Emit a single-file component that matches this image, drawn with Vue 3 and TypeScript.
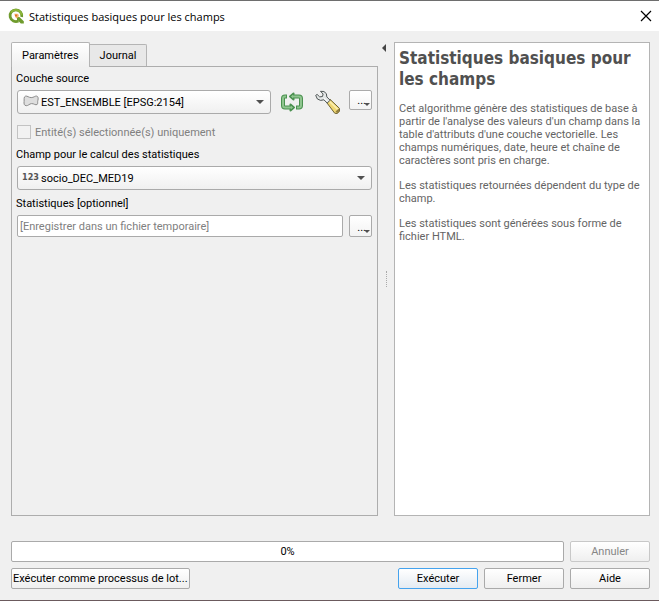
<script setup lang="ts">
import { ref } from 'vue'

const layer = ref<string>('EST_ENSEMBLE [EPSG:2154]')
const field = ref<string>('socio_DEC_MED19')
const output = ref<string>('')
const selectedOnly = ref<boolean>(false)
const activeTab = ref<'params' | 'log'>('params')
const progress = ref<number>(0)

const paragraphs: string[] = [
  "Cet algorithme génère des statistiques de base à partir de l'analyse des valeurs d'un champ dans la table d'attributs d'une couche vectorielle. Les champs numériques, date, heure et chaîne de caractères sont pris en charge.",
  'Les statistiques retournées dépendent du type de champ.',
  'Les statistiques sont générées sous forme de fichier HTML.',
]
</script>

<template>
  <div class="dialog">
    <header class="titlebar">
      <svg class="logo" width="16" height="16" viewBox="0 0 16 16" aria-hidden="true">
        <path d="M10.500 13A5.900 5.900 0 1 1 13.700 9" fill="none" stroke="#6f9b2d" stroke-width="2.800" />
        <path d="M3 4.500A5.900 5.900 0 0 1 13.600 7" fill="none" stroke="#8db63a" stroke-width="2" />
        <path d="M9 9h2.400l4.400 4.200v2.300h-3L9 11.600z" fill="#6f9b2d" />
        <path d="M6.200 5.800h3.400l1.200 1.300-.4 2.200-2.300 1.200z" fill="#f3b46b" />
        <circle cx="8" cy="7.600" r="1.100" fill="#e0702a" />
      </svg>
      <h1 class="title">Statistiques basiques pour les champs</h1>
      <button class="close" type="button" aria-label="Fermer la fenêtre">
        <svg width="12" height="12" viewBox="0 0 12 12"><path d="M1 1l10 10M11 1L1 11" stroke="#000" stroke-width="1.2" /></svg>
      </button>
    </header>

    <main class="body">
      <section class="left">
        <div class="tabs" role="tablist">
          <button class="tab" :class="{ active: activeTab === 'params' }" type="button" role="tab" @click="activeTab = 'params'">Paramètres</button>
          <button class="tab" :class="{ active: activeTab === 'log' }" type="button" role="tab" @click="activeTab = 'log'">Journal</button>
        </div>
        <form class="panel" @submit.prevent>
          <label class="label" for="layer">Couche source</label>
          <div class="row">
            <div class="combo">
              <svg class="combo-icon" width="16" height="12" viewBox="0 0 16 12" aria-hidden="true">
                <path d="M2.400 1.200C4.500.6 5.600 2.600 8.200 2.600S12 .8 13.600 1.100C15.200 1.400 15.500 3.400 14.900 5.300S15.100 8.600 14.200 9.400C12.600 10.700 11 8.400 8.500 8.600C6.300 8.800 5.200 10.900 3.200 10.700C1.100 10.500.8 8.700 1.100 6.500C1.300 4.600.6 1.800 2.400 1.200z" fill="#dedede" stroke="#8b8b8b" />
              </svg>
              <select id="layer" v-model="layer" class="select">
                <option>EST_ENSEMBLE [EPSG:2154]</option>
              </select>
              <span class="arrow"></span>
            </div>
            <button class="icon-btn" type="button" aria-label="Itérer sur les entités">
              <svg width="24" height="24" viewBox="0 0 24 24">
                <g fill="none" stroke-linejoin="round">
                  <path d="M7 6.500H5a2 2 0 0 0-2 2v7a2 2 0 0 0 2 2H10M16 17.500h3a2 2 0 0 0 2-2v-7a2 2 0 0 0-2-2H14" stroke="#4b9150" stroke-width="4" />
                  <path d="M13.500 3.500v6L10 6.500zM10.500 14.500v6L14 17.500z" fill="#8fc58f" stroke="#4b9150" stroke-width="2" />
                  <path d="M6 6.500H5a2 2 0 0 0-2 2v7a2 2 0 0 0 2 2H12M17 17.500h2a2 2 0 0 0 2-2v-7a2 2 0 0 0-2-2H12" stroke="#8fc58f" stroke-width="2" />
                  <path d="M13 4.700v3.600L11 6.500zM11 15.700v3.600L13 17.500z" fill="#8fc58f" />
                </g>
              </svg>
            </button>
            <button class="icon-btn" type="button" aria-label="Options avancées">
              <svg width="27" height="24" viewBox="-2 0 27 24">
                <path d="M11.800 12.700l3.200-3.400L24.500 18.400v2.900l-2.400 2.200-2.400-.3z" fill="#f0d873" stroke="#6b6135" stroke-width="1" />
                <path d="M14.500 11.400l8.500 8.200" stroke="#fbeeb0" stroke-width="1.500" />
                <path d="M20.500 21.600l3-2.800 1 1v1.500l-2.200 1.900z" fill="#94803f" />
                <path d="M5.500 1.300l3.400.2 2.500 2.200.4 3.200 3.300 3.300-2.900 2.900-3.300-3.300-3.300.6L2.400 9 .7 5.400l1.400-1L4.700 6.900l2.800-.4.600-2.500z" fill="#e4e7e7" stroke="#4f5656" stroke-width="1" stroke-linejoin="round" />
                <path d="M9 8.200l3.500 3.300" stroke="#fff" />
              </svg>
            </button>
            <button class="more" type="button" aria-label="Choisir la source"><span class="dots">...</span><span class="more-arrow"></span></button>
          </div>

          <label class="check disabled">
            <input v-model="selectedOnly" class="box" type="checkbox" disabled />
            <span>Entité(s) sélectionnée(s) uniquement</span>
          </label>

          <label class="label" for="field">Champ pour le calcul des statistiques</label>
          <div class="row">
            <div class="combo">
              <span class="combo-icon num">123</span>
              <select id="field" v-model="field" class="select">
                <option>socio_DEC_MED19</option>
              </select>
              <span class="arrow"></span>
            </div>
          </div>

          <label class="label" for="output">Statistiques [optionnel]</label>
          <div class="row tight">
            <input id="output" v-model="output" class="text" type="text" placeholder="[Enregistrer dans un fichier temporaire]" />
            <button class="more tall" type="button" aria-label="Choisir la sortie"><span class="dots">...</span><span class="more-arrow"></span></button>
          </div>
        </form>
      </section>

      <div class="splitter">
        <button class="collapse" type="button" aria-label="Replier l'aide"></button>
        <span class="grip"></span>
      </div>

      <article class="help">
        <h2>Statistiques basiques pour les champs</h2>
        <p v-for="p in paragraphs" :key="p">{{ p }}</p>
      </article>
    </main>

    <footer class="footer">
      <div class="line">
        <div class="progress" role="progressbar" :aria-valuenow="progress" aria-valuemin="0" aria-valuemax="100">{{ progress }}%</div>
        <button class="btn" type="button" disabled>Annuler</button>
      </div>
      <div class="line">
        <button class="btn batch" type="button">Exécuter comme processus de lot...</button>
        <button class="btn primary" type="button">Exécuter</button>
        <button class="btn" type="button">Fermer</button>
        <button class="btn" type="button">Aide</button>
      </div>
    </footer>
  </div>
</template>

<style>
body {
  background: #f0f0f0;
}
</style>

<style scoped>
.dialog,
.dialog * {
  box-sizing: border-box;
}
.dialog {
  display: flex;
  flex-direction: column;
  min-height: 100vh;
  border-top: 1px solid #6e6e6e;
  border-bottom: 1px solid #6b5a5d;
  background: #f0f0f0;
  color: #000;
  font-family: Tahoma, Roboto, sans-serif;
  font-size: 11px;
  line-height: 13px;
}
button,
input,
select {
  margin: 0;
  font: inherit;
  color: inherit;
}
.titlebar {
  display: flex;
  align-items: center;
  height: 30px;
  padding: 0 7px 0 8px;
  gap: 5px;
  background: #fff;
}
.title {
  flex: 1;
  margin: 0;
  font-family: 'Open Sans', 'Noto Sans', sans-serif;
  font-size: 11px;
  font-weight: 400;
}
.close {
  display: flex;
  padding: 0;
  border: 0;
  background: none;
}
.body {
  display: grid;
  grid-template-columns: minmax(0, 367fr) 16px minmax(0, 256fr);
  flex: 1;
  padding: 11px 9px 0 11px;
}
.left {
  display: flex;
  flex-direction: column;
}
.tabs {
  display: flex;
  align-items: flex-end;
  height: 24px;
}
.tab {
  height: 22px;
  padding: 0 10px;
  border: 1px solid #b4b4b4;
  border-left: 0;
  border-bottom: 0;
  border-radius: 0 2px 0 0;
  background: #e8e8e8;
}
.tab.active {
  position: relative;
  z-index: 1;
  height: 25px;
  margin-bottom: -1px;
  border-left: 1px solid #b4b4b4;
  border-radius: 2px 2px 0 0;
  background: linear-gradient(#fff, #f0f0f0);
}
.panel {
  display: flex;
  flex-direction: column;
  flex: 1;
  padding: 5px 5px 0 4px;
  border: 1px solid #adadad;
}
.label {
  margin-bottom: 5px;
}
.row {
  display: flex;
  align-items: flex-start;
  gap: 9px;
  padding-left: 1px;
  margin-bottom: 7px;
}
.row.tight {
  gap: 6px;
}
.combo {
  position: relative;
  flex: 1;
  min-width: 0;
}
.combo-icon {
  position: absolute;
  left: 6px;
  top: 5px;
  pointer-events: none;
}
.num {
  left: 5px;
  color: #555;
  font-family: 'DejaVu Sans Condensed', 'DejaVu Sans', sans-serif;
  font-stretch: condensed;
  font-size: 9px;
  font-weight: 700;
}
.select {
  display: block;
  width: 100%;
  height: 24px;
  padding: 1px 24px 0 23px;
  appearance: none;
  border: 1px solid #aaa;
  border-radius: 3px;
  background: linear-gradient(#fff, #f0f0f0);
}
.arrow {
  position: absolute;
  right: 7px;
  top: 10px;
  border: 4px solid transparent;
  border-top-color: #505050;
  border-bottom: 0;
  pointer-events: none;
}
.icon-btn {
  display: flex;
  padding: 0;
  border: 0;
  background: none;
}
.more {
  position: relative;
  width: 23px;
  height: 20px;
  padding: 0;
  border: 1px solid #aaa;
  border-radius: 2px;
  background: linear-gradient(#fff, #f3f3f3);
}
.more.tall {
  height: 22px;
}
.dots {
  position: absolute;
  right: 5px;
  bottom: 2px;
}
.more-arrow {
  position: absolute;
  right: 1px;
  bottom: 3px;
  border: 3px solid transparent;
  border-top-color: #505050;
  border-bottom: 0;
}
.check {
  display: flex;
  align-items: center;
  gap: 4px;
  padding-left: 1px;
  margin: 4px 0 9px;
}
.disabled {
  color: #808080;
}
.box {
  width: 14px;
  height: 14px;
  appearance: none;
  border: 1px solid #c3c3c3;
  background: #f2f2f2;
}
.text {
  flex: 1;
  min-width: 0;
  height: 22px;
  padding: 1px 2px 0;
  border: 1px solid #aaa;
  border-radius: 2px;
  background: #fff;
}
.text::placeholder {
  color: #808080;
  opacity: 1;
}
.splitter {
  position: relative;
  display: flex;
  align-items: center;
  justify-content: center;
}
.collapse {
  position: absolute;
  left: 4px;
  top: 2px;
  padding: 0;
  border: 4px solid transparent;
  border-right-color: #454545;
  border-left: 0;
  background: none;
}
.grip {
  height: 16px;
  border-left: 1px dotted #aaa;
}
.help {
  padding: 5px 4px;
  border: 1px solid #b4b4b4;
  background: #fff;
  color: #646464;
}
.help h2 {
  margin: 0 0 12px;
  color: #505050;
  font-family: Tahoma, 'DejaVu Sans Condensed', 'DejaVu Sans', sans-serif;
  font-stretch: condensed;
  font-size: 17px;
  line-height: 21px;
  font-weight: 700;
}
.help p {
  margin: 0 0 12px;
}
.footer {
  display: flex;
  flex-direction: column;
  gap: 6px;
  padding: 25px 9px 11px 11px;
}
.line {
  display: flex;
  gap: 6px;
}
.progress {
  flex: 1;
  height: 21px;
  border: 1px solid #aaa;
  border-radius: 2px;
  background: #fff;
  line-height: 20px;
  text-align: center;
}
.btn {
  width: 80px;
  height: 21px;
  padding: 0;
  border: 1px solid #aaa;
  border-radius: 2px;
  background: linear-gradient(#fff, #efefef);
}
.btn:disabled {
  border-color: #c8c8c8;
  color: #868686;
}
.batch {
  width: auto;
  padding: 0 1px;
  margin-right: auto;
}
.primary {
  border-color: #45a3ee;
  background: linear-gradient(#fff, #e4ebf2);
}
</style>
